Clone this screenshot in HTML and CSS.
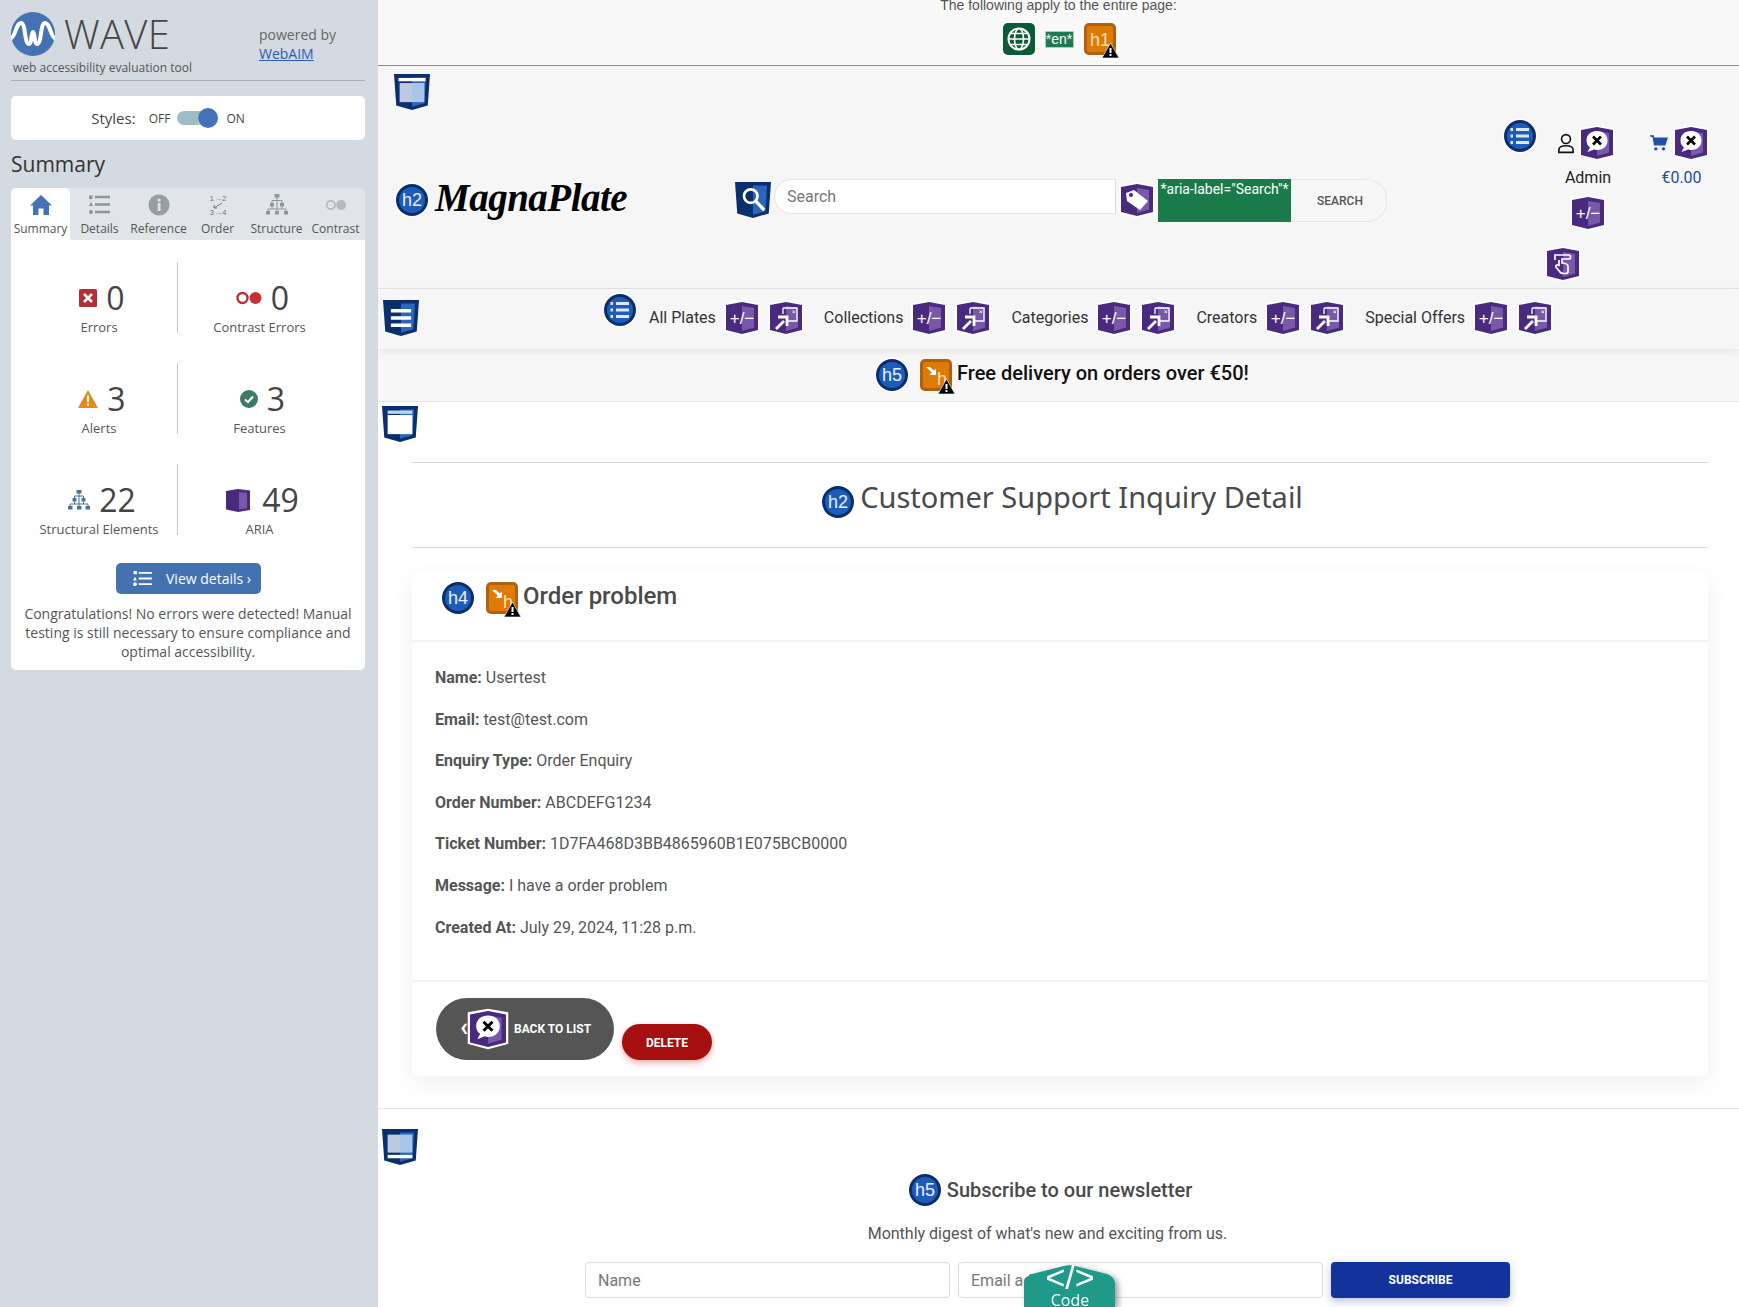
FILE: index.html
```html
<!DOCTYPE html>
<html lang="en">
<head>
    <meta charset="utf-8">
    <title>Customer Support Inquiry Detail</title>
    <link rel="stylesheet" href="styles.css">
</head>
<body>

<!-- shared shapes for the wave icons -->
<svg class="defs" aria-hidden="true">
    <symbol id="sh-purple" viewBox="0 0 32 32" overflow="visible">
        <path d="M0 3 16 0 32 3V28L16 32 0 28Z" fill="#4a2a7e" stroke="#fff" stroke-width="3" paint-order="stroke"/>
        <path d="M16 4 28 6V25.500L16 29Z" fill="#7a58a8"/>
    </symbol>
    <symbol id="sh-blue" viewBox="0 0 32 32" overflow="visible">
        <path d="M0 0H32L30 28 16 32 2 28Z" fill="#0b2f6c"/>
        <path d="M16 3H28.500L27 26 16 29Z" fill="#2a66bc"/>
    </symbol>
    <symbol id="bd-circle" viewBox="0 0 32 32" overflow="visible">
        <circle cx="16" cy="16" r="16" fill="#0a2e6c" stroke="#fff" stroke-width="3" paint-order="stroke"/>
        <circle cx="16" cy="16" r="13" fill="#1f5cb8"/>
    </symbol>
    <symbol id="bd-list" viewBox="0 0 32 32" overflow="visible">
        <circle cx="16" cy="16" r="16" fill="#0a2e6c" stroke="#fff" stroke-width="3" paint-order="stroke"/>
        <circle cx="16" cy="16" r="13" fill="#1f5cb8"/>
        <path d="M12 9.500H25M12 16H25M12 22.500H25" stroke="#dce8fa" stroke-width="3"/>
        <path d="M6.500 9.500H9M6.500 16H9M6.500 22.500H9" stroke="#dce8fa" stroke-width="3"/>
    </symbol>
    <symbol id="or-box" viewBox="0 0 32 32" overflow="visible">
        <rect width="32" height="32" rx="5" fill="#b0600f"/>
        <rect x="3" y="3" width="26" height="26" rx="2" fill="#dd7a08"/>
    </symbol>
    <symbol id="warn" viewBox="0 0 32 32" overflow="visible">
        <path d="M26.500 20 35 35H18Z" fill="#000" stroke="#fff" stroke-width=".6"/>
        <path d="M26.500 25V30M26.500 31V33" stroke="#fff" stroke-width="2"/>
    </symbol>
    <symbol id="or-arrow" viewBox="0 0 32 32" overflow="visible">
        <path d="M6 8H10L14 11.500 16 9.500V16H9.500L11.800 13.500Z" fill="#fff"/>
    </symbol>
    <symbol id="i-chat-x" viewBox="0 0 32 32" overflow="visible">
        <use href="#sh-purple" width="32" height="32"/>
        <path d="M16 4C9.500 4 5.500 8 5.500 13.500C5.500 16.500 6.800 18.800 9 20.300L6.500 25 13 22.500C14 22.800 15 23 16 23 22.500 23 26.500 19 26.500 13.500 26.500 8 22.500 4 16 4Z" fill="#fff"/>
        <path d="M12 9.500 20 17.500M20 9.500 12 17.500" stroke="#000" stroke-width="2.600"/>
    </symbol>
    <symbol id="i-link" viewBox="0 0 32 32" overflow="visible">
        <use href="#sh-purple" width="32" height="32"/>
        <path d="M13 6H27V19H17" fill="none" stroke="#fff" stroke-width="1.300"/>
        <path d="M13 6V12" stroke="#fff" stroke-width="1.300"/>
        <path d="M22.500 8.500 25 11M25 8.500 22.500 11" stroke="#fff"/>
        <path d="M6 27 14 19M8 15H17V24" fill="none" stroke="#fff" stroke-width="2.800"/>
    </symbol>
</svg>

<aside class="wave">
    <div class="wave-brand">
        <div class="wave-logo-block">
            <div class="wave-logo">
                <svg class="wave-mark" viewBox="0 0 44 44">
                    <circle cx="22" cy="22" r="22" fill="#4472b4"/>
                    <path d="M0 26C4 26 5 11 10 11 15 11 13 32 18 32 21 32 20 20 22 20 24 20 23 32 26 32 31 32 29 11 34 11 39 11 40 26 44 26" fill="none" stroke="#fff" stroke-width="4"/>
                </svg>
                <span class="wave-name">WAVE</span>
            </div>
            <div class="wave-tag">web accessibility evaluation tool</div>
        </div>
        <div class="wave-powered">powered by<br><a href="#">WebAIM</a></div>
    </div>

    <div class="styles-card">
        <span class="styles-label">Styles:</span>
        <span class="styles-state">OFF</span>
        <span class="toggle"></span>
        <span class="styles-state">ON</span>
    </div>

    <h2 class="wave-title">Summary</h2>

    <ul class="tabs">
        <li class="tab tab-active">
            <svg viewBox="0 0 24 22"><path d="M12 1 23 11.500H20V21H14.500V14.500H9.500V21H4V11.500H1Z" fill="#4472b4"/></svg>
            Summary
        </li>
        <li class="tab">
            <svg viewBox="0 0 24 22"><path d="M7 3H22M7 10.500H22M7 18H22" stroke="#8d959d" stroke-width="2.400"/><rect x="1" y="1.500" width="3.500" height="3.500" fill="#8d959d"/><path d="M3 8 5 12H1Z" fill="#8d959d"/><circle cx="3" cy="18" r="2" fill="#8d959d"/></svg>
            Details
        </li>
        <li class="tab">
            <svg viewBox="0 0 24 22"><circle cx="12" cy="11" r="10.500" fill="#969da4"/><rect x="10.700" y="9" width="2.800" height="8" fill="#dfe3e7"/><rect x="10.700" y="4.800" width="2.800" height="2.800" fill="#dfe3e7"/></svg>
            Reference
        </li>
        <li class="tab">
            <svg viewBox="0 0 24 22"><text x="12" y="7" class="order-num">1→2</text><path d="M16 9 8 14M8 14V11M8 14H11" stroke="#777" fill="none"/><text x="12" y="21" class="order-num">3→4</text></svg>
            Order
        </li>
        <li class="tab">
            <svg viewBox="0 0 24 22"><g fill="#8d959d"><rect x="9.500" y="0" width="5" height="3.500"/><rect x="5" y="9" width="4" height="3.500"/><rect x="15" y="9" width="4" height="3.500"/><rect x="1" y="17" width="4" height="3.500"/><rect x="10" y="17" width="4" height="3.500"/><rect x="19" y="17" width="4" height="3.500"/></g><path d="M12 3V17M7 9V6.500H17V9M7 12.500V15H3V17M17 12.500V15H21V17M7 15H17" fill="none" stroke="#8d959d"/></svg>
            Structure
        </li>
        <li class="tab">
            <svg viewBox="0 0 28 22"><circle cx="8" cy="11" r="4.800" fill="none" stroke="#b4babf" stroke-width="2"/><circle cx="20" cy="11" r="5.800" fill="#b4babf"/></svg>
            Contrast
        </li>
    </ul>

    <div class="panel">
        <div class="stats">
            <div class="stat">
                <div class="stat-top">
                    <svg class="stat-ico" viewBox="0 0 18 18"><rect width="18" height="18" rx="1.500" fill="#b03036"/><path d="M5 5 13 13M13 5 5 13" stroke="#fff" stroke-width="2.500"/></svg>
                    <span class="stat-num">0</span>
                </div>
                <div class="stat-label">Errors</div>
            </div>
            <div class="stat stat-right">
                <div class="stat-top">
                    <svg class="stat-ico stat-ico-wide" viewBox="0 0 26 14"><circle cx="6.500" cy="7" r="5" fill="none" stroke="#b83438" stroke-width="2.400"/><circle cx="19.500" cy="7" r="6" fill="#c43238"/></svg>
                    <span class="stat-num">0</span>
                </div>
                <div class="stat-label">Contrast Errors</div>
            </div>
            <div class="stat">
                <div class="stat-top">
                    <svg class="stat-ico stat-ico-alert" viewBox="0 0 20 18"><path d="M10 0 20 18H0Z" fill="#e28c1c"/><rect x="9" y="5.500" width="2" height="6.500" fill="#fff"/><rect x="9" y="13.500" width="2" height="2" fill="#fff"/></svg>
                    <span class="stat-num">3</span>
                </div>
                <div class="stat-label">Alerts</div>
            </div>
            <div class="stat stat-right">
                <div class="stat-top">
                    <svg class="stat-ico" viewBox="0 0 18 18"><circle cx="9" cy="9" r="9" fill="#3c7a64"/><path d="M5 9.500 8 12 13 6.500" fill="none" stroke="#fff" stroke-width="2"/></svg>
                    <span class="stat-num">3</span>
                </div>
                <div class="stat-label">Features</div>
            </div>
            <div class="stat">
                <div class="stat-top">
                    <svg class="stat-ico stat-ico-tree" viewBox="0 0 22 20"><g fill="#4c7199"><rect x="8.500" y="0" width="5" height="3.500"/><rect x="4.500" y="8" width="4" height="3.500"/><rect x="13.500" y="8" width="4" height="3.500"/><rect x="0" y="16" width="4.500" height="3.500"/><rect x="9" y="16" width="4.500" height="3.500"/><rect x="17.500" y="16" width="4.500" height="3.500"/></g><path d="M11 3V16M6.500 8V6H15.500V8M6.500 11.500V14H2V16M15.500 11.500V14H20V16M6.500 14H15.500" fill="none" stroke="#4c7199"/></svg>
                    <span class="stat-num">22</span>
                </div>
                <div class="stat-label">Structural Elements</div>
            </div>
            <div class="stat stat-right">
                <div class="stat-top">
                    <svg class="stat-ico stat-ico-aria" viewBox="0 0 24 23"><path d="M0 2 12 0 24 1.500V21L12 23 0 20.500Z" fill="#4a2a7e"/><path d="M13 3 21 4V19L13 20.500Z" fill="#7a58a8"/></svg>
                    <span class="stat-num">49</span>
                </div>
                <div class="stat-label">ARIA</div>
            </div>
        </div>
        <a class="view-btn" href="#">
            <svg viewBox="0 0 20 16"><path d="M6 2H20M6 8H20M6 14H20" stroke="#fff" stroke-width="2"/><rect x="0.500" y="0" width="3.500" height="3.500" fill="#fff"/><path d="M2 6 4 10H0Z" fill="#fff"/><circle cx="2" cy="14" r="2" fill="#fff"/></svg>
            <span>View details ›</span>
        </a>
        <p class="wave-note">Congratulations! No errors were detected! Manual testing is still necessary to ensure compliance and optimal accessibility.</p>
    </div>
</aside>

<main class="page">
    <div class="page-note">
        <div class="page-note-text">The following apply to the entire page:</div>
        <div class="page-note-icons">
            <svg class="wv" viewBox="0 0 32 32">
                <rect width="32" height="32" rx="5" fill="#0b5a38"/>
                <circle cx="16" cy="16" r="10.500" fill="none" stroke="#fff" stroke-width="2"/>
                <ellipse cx="16" cy="16" rx="4.500" ry="10.500" fill="none" stroke="#fff" stroke-width="1.600"/>
                <path d="M5.500 16H26.500M7 10.500H25M7 21.500H25" stroke="#fff" stroke-width="1.600"/>
            </svg>
            <span class="lang-tag">*en*</span>
            <svg class="wv" viewBox="0 0 32 32">
                <use href="#or-box" width="32" height="32"/>
                <text x="16" y="23" class="wv-text wv-text-or">h1</text>
                <use href="#warn" width="32" height="32"/>
            </svg>
        </div>
    </div>

    <header class="site-head">
        <svg class="wv wv-tall corner corner-head" viewBox="0 0 32 32">
            <use href="#sh-blue" width="32" height="32"/>
            <rect x="4" y="3.500" width="24" height="3" fill="#fff"/>
            <rect x="5" y="8" width="11" height="17" fill="#bcc9de"/>
            <rect x="16" y="8" width="11" height="17" fill="#a9c6ea"/>
        </svg>

        <div class="brand">
            <svg class="wv" viewBox="0 0 32 32"><use href="#bd-circle" width="32" height="32"/><text x="16" y="22" class="wv-text">h2</text></svg>
            <span class="logo">MagnaPlate</span>
        </div>

        <form class="search">
            <svg class="wv wv-search" viewBox="0 0 32 32">
                <use href="#sh-blue" width="32" height="32"/>
                <circle cx="14" cy="12.500" r="6" fill="none" stroke="#fff" stroke-width="2.400"/>
                <path d="M18.500 17 26 25" stroke="#fff" stroke-width="3"/>
            </svg>
            <input class="search-input" type="text" placeholder="Search">
            <svg class="wv wv-tag" viewBox="0 0 32 32">
                <use href="#sh-purple" width="32" height="32"/>
                <path d="M5 9 13 6 27 17 19 26 6 17Z" fill="#fff"/>
                <circle cx="10" cy="11" r="2" fill="#4a2a7e"/>
            </svg>
            <span class="aria-note">*aria-label="Search"*</span>
            <button class="search-btn" type="button">SEARCH</button>
        </form>

        <div class="account">
            <svg class="wv" viewBox="0 0 32 32"><use href="#bd-list" width="32" height="32"/></svg>
            <div class="acct acct-user">
                <div class="acct-row">
                    <svg class="acct-ico" viewBox="0 0 18 24"><circle cx="9" cy="7" r="5" fill="none" stroke="#111" stroke-width="1.800"/><path d="M1 22V19C1 16 4 14.500 9 14.500S17 16 17 19V22Z" fill="none" stroke="#111" stroke-width="1.800"/></svg>
                    <svg class="wv" viewBox="0 0 32 32"><use href="#i-chat-x" width="32" height="32"/></svg>
                </div>
                <div class="acct-label">Admin</div>
                <svg class="wv acct-gap" viewBox="0 0 32 32"><use href="#sh-purple" width="32" height="32"/><text x="16" y="21.500" class="wv-text wv-plus">+/−</text></svg>
                <svg class="wv acct-touch" viewBox="0 0 32 32">
                    <use href="#sh-purple" width="32" height="32"/>
                    <path d="M8 12V7H22C24 7 24 11 22 11H15V15C15 15 20 15 21 18V24C21 26 14 26 13 24L9 19C8 17 11 16 12 18V12" fill="none" stroke="#fff" stroke-width="1.700"/>
                </svg>
            </div>
            <div class="acct acct-cart">
                <div class="acct-row">
                    <svg class="cart-ico" viewBox="0 0 20 18"><path d="M0 1H3.500L5 11H16.500L19 3.500H4" fill="#1d4fa8" stroke="#1d4fa8" stroke-width="1.500"/><circle cx="6.500" cy="15.500" r="1.900" fill="#1d4fa8"/><circle cx="15" cy="15.500" r="1.900" fill="#1d4fa8"/></svg>
                    <svg class="wv" viewBox="0 0 32 32"><use href="#i-chat-x" width="32" height="32"/></svg>
                </div>
                <div class="acct-label acct-price">€0.00</div>
            </div>
        </div>
    </header>

    <nav class="site-nav">
        <svg class="wv wv-tall corner corner-nav" viewBox="0 0 32 32">
            <use href="#sh-blue" width="32" height="32"/>
            <path d="M7 9.500H25M7 16H25M7 22.500H25" stroke="#fff" stroke-width="3.200"/>
        </svg>
        <svg class="wv nav-list" viewBox="0 0 32 32"><use href="#bd-list" width="32" height="32"/></svg>
        <div class="nav-item">
            <a href="#">All Plates</a>
            <svg class="wv" viewBox="0 0 32 32"><use href="#sh-purple" width="32" height="32"/><text x="16" y="21.500" class="wv-text wv-plus">+/−</text></svg>
            <svg class="wv" viewBox="0 0 32 32"><use href="#i-link" width="32" height="32"/></svg>
        </div>
        <div class="nav-item">
            <a href="#">Collections</a>
            <svg class="wv" viewBox="0 0 32 32"><use href="#sh-purple" width="32" height="32"/><text x="16" y="21.500" class="wv-text wv-plus">+/−</text></svg>
            <svg class="wv" viewBox="0 0 32 32"><use href="#i-link" width="32" height="32"/></svg>
        </div>
        <div class="nav-item">
            <a href="#">Categories</a>
            <svg class="wv" viewBox="0 0 32 32"><use href="#sh-purple" width="32" height="32"/><text x="16" y="21.500" class="wv-text wv-plus">+/−</text></svg>
            <svg class="wv" viewBox="0 0 32 32"><use href="#i-link" width="32" height="32"/></svg>
        </div>
        <div class="nav-item">
            <a href="#">Creators</a>
            <svg class="wv" viewBox="0 0 32 32"><use href="#sh-purple" width="32" height="32"/><text x="16" y="21.500" class="wv-text wv-plus">+/−</text></svg>
            <svg class="wv" viewBox="0 0 32 32"><use href="#i-link" width="32" height="32"/></svg>
        </div>
        <div class="nav-item">
            <a href="#">Special Offers</a>
            <svg class="wv" viewBox="0 0 32 32"><use href="#sh-purple" width="32" height="32"/><text x="16" y="21.500" class="wv-text wv-plus">+/−</text></svg>
            <svg class="wv" viewBox="0 0 32 32"><use href="#i-link" width="32" height="32"/></svg>
        </div>
    </nav>

    <div class="promo">
        <svg class="wv" viewBox="0 0 32 32"><use href="#bd-circle" width="32" height="32"/><text x="16" y="22" class="wv-text">h5</text></svg>
        <svg class="wv" viewBox="0 0 32 32">
            <use href="#or-box" width="32" height="32"/>
            <use href="#or-arrow" width="32" height="32"/>
            <text x="22" y="26" class="wv-text wv-text-or">h</text>
            <use href="#warn" width="32" height="32"/>
        </svg>
        <span class="promo-text">Free delivery on orders over €50!</span>
    </div>

    <section class="content">
        <svg class="wv wv-tall corner corner-main" viewBox="0 0 32 32">
            <use href="#sh-blue" width="32" height="32"/>
            <rect x="5" y="4" width="22" height="3" fill="#bcd2ee"/>
            <rect x="5" y="8" width="22" height="17" fill="#fff"/>
        </svg>
        <hr class="rule">
        <h2 class="page-title">
            <svg class="wv" viewBox="0 0 32 32"><use href="#bd-circle" width="32" height="32"/><text x="16" y="22" class="wv-text">h2</text></svg>
            <span class="page-title-text">Customer Support Inquiry Detail</span>
        </h2>
        <hr class="rule">

        <article class="card">
            <div class="card-head">
                <svg class="wv" viewBox="0 0 32 32"><use href="#bd-circle" width="32" height="32"/><text x="16" y="22" class="wv-text">h4</text></svg>
                <svg class="wv" viewBox="0 0 32 32">
                    <use href="#or-box" width="32" height="32"/>
                    <use href="#or-arrow" width="32" height="32"/>
                    <text x="22" y="26" class="wv-text wv-text-or">h</text>
                    <use href="#warn" width="32" height="32"/>
                </svg>
                <h4 class="card-title">Order problem</h4>
            </div>
            <div class="card-body">
                <p><strong>Name:</strong> Usertest</p>
                <p><strong>Email:</strong> test@test.com</p>
                <p><strong>Enquiry Type:</strong> Order Enquiry</p>
                <p><strong>Order Number:</strong> ABCDEFG1234</p>
                <p><strong>Ticket Number:</strong> 1D7FA468D3BB4865960B1E075BCB0000</p>
                <p><strong>Message:</strong> I have a order problem</p>
                <p><strong>Created At:</strong> July 29, 2024, 11:28 p.m.</p>
            </div>
            <div class="card-foot">
                <a class="btn-back" href="#">
                    <span class="chev">‹</span>
                    <svg class="wv wv-back" viewBox="0 0 32 32">
                        <path d="M-2 1 16 -2 34 1V29L16 34 -2 29Z" fill="#fff"/>
                        <use href="#i-chat-x" width="32" height="32"/>
                    </svg>
                    BACK TO LIST
                </a>
                <a class="btn-del" href="#">DELETE</a>
            </div>
        </article>
    </section>

    <footer class="news">
        <svg class="wv wv-tall corner corner-foot" viewBox="0 0 32 32">
            <use href="#sh-blue" width="32" height="32"/>
            <rect x="5" y="5" width="11" height="16" fill="#bcc9de"/>
            <rect x="16" y="5" width="11" height="16" fill="#a9c6ea"/>
            <rect x="5" y="23" width="22" height="3" fill="#fff"/>
        </svg>
        <h5 class="news-title">
            <svg class="wv" viewBox="0 0 32 32"><use href="#bd-circle" width="32" height="32"/><text x="16" y="22" class="wv-text">h5</text></svg>
            Subscribe to our newsletter
        </h5>
        <p class="news-sub">Monthly digest of what's new and exciting from us.</p>
        <form class="news-form">
            <input class="news-input" type="text" placeholder="Name">
            <input class="news-input" type="text" placeholder="Email address">
            <button class="news-btn" type="button">SUBSCRIBE</button>
        </form>
    </footer>

    <div class="code-tab">
        <svg viewBox="0 0 91 42" width="91" height="42">
            <path d="M0 42V20C0 14 3 11 8 9L40 1C44 0 47 0 51 1L83 9C88 11 91 14 91 20V42Z" fill="#1f9a8a"/>
            <text x="46" y="24" class="code-glyph">&lt;/&gt;</text>
            <text x="46" y="41" class="code-word">Code</text>
        </svg>
    </div>
</main>

</body>
</html>
```
FILE: styles.css
```css
* {
    box-sizing: border-box;
}

html, body {
    margin: 0;
    height: 1307px;
    overflow: hidden;
}

body {
    display: flex;
    font-family: "Roboto", sans-serif;
    font-size: 16px;
    color: #555;
    background: #fff;
}

.defs {
    position: absolute;
    width: 0;
    height: 0;
}

/* ---- wave sidebar ---- */
.wave {
    flex: 0 0 378px;
    height: 1307px;
    padding: 0 13px 0 11px;
    background: #d4dae1;
    font-family: "Open Sans", sans-serif;
    color: #444;
}

.wave-brand {
    display: flex;
    height: 81px;
    border-bottom: 1px solid #a9afb6;
}

.wave-logo-block {
    width: 248px;
}

.wave-logo {
    display: flex;
    align-items: center;
    gap: 9px;
    padding-top: 12px;
    height: 56px;
}

.wave-mark {
    width: 44px;
    height: 44px;
}

.wave-name {
    font-size: 40px;
    font-weight: 300;
    line-height: 44px;
    letter-spacing: 0.3px;
    color: #444;
}

.wave-tag {
    padding: 3px 0 0 2px;
    font-size: 12px;
    line-height: 18px;
    color: #555;
}

.wave-powered {
    padding-top: 25px;
    font-size: 14px;
    line-height: 19px;
    color: #666;
}

.wave-powered a {
    color: #2a5db0;
}

.styles-card {
    display: flex;
    align-items: center;
    justify-content: center;
    height: 44px;
    margin-top: 15px;
    padding-right: 40px;
    background: #fff;
    border-radius: 5px;
    font-size: 12px;
}

.styles-label {
    margin-right: 13px;
    font-size: 15px;
}

.toggle {
    position: relative;
    width: 33px;
    height: 14px;
    margin: 0 16px 0 7px;
    background: #9dbcc5;
    border-radius: 7px;
}

.toggle::after {
    content: "";
    position: absolute;
    top: -3px;
    right: -8px;
    width: 20px;
    height: 20px;
    background: #4472b8;
    border-radius: 50%;
    box-shadow: 0 1px 1px #fff;
}

.wave-title {
    margin: 5px 0;
    font-size: 21px;
    font-weight: 400;
    line-height: 38px;
    color: #333;
}

.tabs {
    display: flex;
    height: 52px;
    margin: 0;
    padding: 0;
    list-style: none;
    background: #e1e5e9;
    border-radius: 5px 5px 0 0;
}

.tab {
    display: flex;
    flex: 0 0 59px;
    flex-direction: column;
    align-items: center;
    padding-top: 6px;
    font-size: 12px;
    line-height: 16px;
    color: #555;
    white-space: nowrap;
}

.tab svg {
    width: 24px;
    height: 22px;
    margin-bottom: 5px;
}

.tab-active {
    background: #fff;
    border-radius: 5px 5px 0 0;
}

.order-num {
    font: 8px "Liberation Sans", sans-serif;
    fill: #777;
    text-anchor: middle;
}

.panel {
    height: 430px;
    padding-top: 22px;
    background: #fff;
    border-radius: 0 0 5px 5px;
}

.stats {
    display: grid;
    grid-template-columns: 156px 164px;
    grid-auto-rows: 71px;
    row-gap: 30px;
    margin-left: 10px;
}

.stat {
    display: flex;
    flex-direction: column;
    align-items: center;
    padding-top: 18px;
}

.stat-right {
    border-left: 1px solid #c4c8cc;
}

.stat-top {
    display: flex;
    align-items: center;
    height: 36px;
    margin-left: 6px;
    gap: 9px;
}

.stat-ico {
    width: 18px;
    height: 18px;
}

.stat-ico-wide {
    width: 26px;
    height: 14px;
}

.stat-ico-alert {
    width: 20px;
    height: 18px;
}

.stat-ico-tree {
    width: 22px;
    height: 20px;
}

.stat-ico-aria {
    width: 24px;
    height: 23px;
    margin-right: 3px;
}

.stat-num {
    font-size: 32px;
    line-height: 36px;
    color: #444;
}

.stat-label {
    margin-top: 2px;
    font-size: 13px;
    line-height: 18px;
    color: #555;
    white-space: nowrap;
}

.view-btn {
    display: flex;
    align-items: center;
    width: 145px;
    height: 31px;
    margin: 28px 0 0 105px;
    padding-left: 17px;
    gap: 14px;
    background: #4472b0;
    border-radius: 5px;
    font-size: 14px;
    color: #fff;
    text-decoration: none;
}

.view-btn svg {
    width: 19px;
    height: 15px;
}

.wave-note {
    margin: 10px 0 0;
    padding: 0 10px;
    font-size: 14px;
    line-height: 19px;
    text-align: center;
    color: #555;
}

/* ---- page ---- */
.page {
    position: relative;
    flex: 1;
    min-width: 0;
    height: 1307px;
    overflow: hidden;
}

.wv {
    flex: none;
    display: block;
    width: 32px;
    height: 32px;
    overflow: visible;
}

.wv-text {
    font: 18px "Liberation Sans", sans-serif;
    fill: #e8f0ff;
    text-anchor: middle;
}

.wv-text-or {
    fill: #fbe0b0;
}

.wv-plus {
    font-size: 17px;
    fill: #fff;
}

.wv-tall {
    width: 36px;
    height: 36px;
}

.corner {
    position: absolute;
    left: 4px;
}

.corner-head {
    left: 16px;
    top: 8px;
}

.corner-nav {
    left: 5px;
    top: 11px;
}

.corner-main {
    top: 4px;
}

.corner-foot {
    top: 20px;
}

.page-note {
    height: 66px;
    background: #f9f9f9;
    border-bottom: 1px solid #8a8a8a;
    text-align: center;
}

.page-note-text {
    position: relative;
    top: -3px;
    height: 13px;
    font: 14px/16px "Liberation Sans", sans-serif;
    color: #555;
}

.page-note-icons {
    display: flex;
    align-items: center;
    justify-content: center;
    gap: 10px;
    margin-top: 10px;
    padding-left: 1px;
}

.lang-tag {
    width: 29px;
    height: 17px;
    background: #1d7a50;
    border: 1px solid #a9d2bd;
    font: 14px/15px "Liberation Sans", sans-serif;
    color: #fff;
    white-space: nowrap;
}

.site-head {
    position: relative;
    display: flex;
    align-items: flex-start;
    height: 223px;
    padding: 0 31px 0 18px;
    background: #f6f6f6;
    border-bottom: 1px solid #e2e2e2;
}

.brand {
    display: flex;
    flex: 0 0 339px;
    align-items: center;
    gap: 7px;
    margin-top: 118px;
    height: 32px;
}

.logo {
    margin-top: -6px;
    font: italic 700 39px "Liberation Serif", serif;
    letter-spacing: -0.5px;
    color: #000;
}

.search {
    display: flex;
    align-items: flex-start;
    margin-top: 113px;
}

.wv-search {
    width: 36px;
    height: 36px;
    margin: 3px 3px 0 0;
}

.search-input {
    width: 342px;
    height: 35px;
    padding: 0 12px;
    border: 1px solid #e4e4e4;
    border-right-color: #ddd;
    border-radius: 18px 0 0 18px;
    background: #fff;
    font: 16px "Roboto", sans-serif;
}

.search-input::placeholder,
.news-input::placeholder {
    color: #777;
}

.wv-tag {
    margin: 5px 5px 0 5px;
}

.aria-note {
    width: 133px;
    height: 43px;
    padding-top: 3px;
    background: #1a7a4a;
    font-size: 14px;
    line-height: 14px;
    color: #fff;
    white-space: nowrap;
    text-align: center;
}

.search-btn {
    width: 96px;
    height: 43px;
    padding: 0 0 0 3px;
    background: #f6f6f6;
    border: 1px solid #e8e8e8;
    border-left: 0;
    border-radius: 0 20px 20px 0;
    font: 500 12px "Roboto", sans-serif;
    color: #555;
}

.account {
    display: flex;
    align-items: flex-start;
    margin: 54px 0 0 auto;
}

.acct {
    display: flex;
    flex-direction: column;
    align-items: center;
}

.acct-user {
    width: 60px;
    margin: 7px 32px 0 22px;
}

.acct-cart {
    width: 58px;
    margin-top: 7px;
}

.acct-row {
    display: flex;
    align-items: center;
    align-self: flex-start;
    gap: 7px;
}

.acct-ico {
    width: 16px;
    height: 23px;
}

.cart-ico {
    width: 18px;
    height: 18px;
}

.acct-label {
    margin-top: 7px;
    line-height: 24px;
    color: #222;
}

.acct-price {
    padding-left: 5px;
    color: #2a4a9a;
}

.acct-gap {
    margin-top: 7px;
}

.acct-touch {
    margin: 19px 0 0 -50px;
}

.site-nav {
    position: relative;
    z-index: 1;
    display: flex;
    align-items: center;
    gap: 22px;
    height: 60px;
    padding: 0 0 2px 226px;
    background: #f6f6f6;
    box-shadow: 0 3px 8px rgba(0, 0, 0, 0.08);
}

.nav-list {
    margin: -17px -9px 0 0;
}

.nav-item {
    display: flex;
    align-items: center;
    gap: 12px;
}

.nav-item a {
    margin: -2px -2px 0 0;
    color: #333;
    text-decoration: none;
}

.promo {
    display: flex;
    align-items: center;
    height: 53px;
    padding-left: 498px;
    gap: 12px;
    background: #f7f7f7;
    border-bottom: 1px solid #e6e6e6;
}

.promo-text {
    margin: -5px 0 0 -7px;
    font-size: 20px;
    font-weight: 500;
    color: #111;
}

.content {
    position: relative;
    padding: 60px 31px 32px 34px;
    border-bottom: 1px solid #e4e4e4;
}

.rule {
    height: 1px;
    margin: 0;
    border: 0;
    background: #d8d8d8;
}

.page-title {
    display: flex;
    align-items: center;
    justify-content: center;
    gap: 6px;
    height: 84px;
    margin: 0;
    padding: 0 0 7px 5px;
    font: 400 29px "Noto Sans", sans-serif;
    color: #4a4a4a;
}

.page-title-text {
    margin-bottom: 11px;
}

.card {
    margin-top: 23px;
    background: #fff;
    border-radius: 8px;
    box-shadow: 0 8px 24px rgba(0, 0, 0, 0.06);
}

.card-head {
    display: flex;
    align-items: flex-start;
    gap: 12px;
    height: 71px;
    padding: 11px 0 0 30px;
    border-bottom: 2px solid #f3f3f3;
}

.card-title {
    margin: -2px 0 0 -7px;
    font-size: 24px;
    font-weight: 500;
    line-height: 32px;
    color: #4a4a4a;
}

.card-body {
    height: 338px;
    padding: 24px 0 0 23px;
}

.card-body p {
    margin: 0 0 17.6px;
    line-height: 24px;
}

.card-foot {
    display: flex;
    align-items: flex-end;
    gap: 8px;
    padding: 16px 0 16px 24px;
    border-top: 2px solid #f3f3f3;
}

.btn-back {
    display: flex;
    align-items: center;
    width: 178px;
    height: 62px;
    padding-left: 24px;
    background: #555;
    border-radius: 31px;
    font-size: 12px;
    font-weight: 700;
    color: #fff;
    text-decoration: none;
}

.chev {
    width: 10px;
    font-size: 26px;
    font-weight: 700;
    line-height: 18px;
    margin-top: -4px;
}

.wv-back {
    width: 36px;
    height: 36px;
    margin-right: 8px;
}

.btn-del {
    display: flex;
    align-items: center;
    justify-content: center;
    width: 90px;
    height: 36px;
    padding-top: 2px;
    background: #a50f0f;
    border-radius: 18px;
    box-shadow: 0 3px 6px rgba(200, 30, 30, 0.35);
    font-size: 12px;
    font-weight: 700;
    color: #fff;
    text-decoration: none;
}

.news {
    position: relative;
    padding: 65px 0 0 207px;
}

.news-title {
    display: flex;
    align-items: center;
    justify-content: center;
    gap: 6px;
    width: 931px;
    margin: 0;
    font-size: 20px;
    font-weight: 500;
    line-height: 32px;
    color: #4a4a4a;
}

.news-sub {
    width: 925px;
    margin: 16px 0 0;
    line-height: 24px;
    text-align: center;
}

.news-form {
    display: flex;
    gap: 8px;
    width: 925px;
    margin-top: 16px;
}

.news-input {
    width: 365px;
    height: 36px;
    padding: 0 12px;
    background: #fff;
    border: 1px solid #dcdcdc;
    border-radius: 4px;
    font: 16px "Roboto", sans-serif;
}

.news-btn {
    flex: 1;
    height: 36px;
    background: #13339a;
    border: 0;
    border-radius: 4px;
    box-shadow: 0 3px 8px rgba(19, 51, 154, 0.3);
    font: 700 12px "Roboto", sans-serif;
    color: #fff;
}

.code-tab {
    position: absolute;
    left: 646px;
    top: 1265px;
    width: 91px;
    height: 42px;
    filter: drop-shadow(3px 2px 3px rgba(0, 0, 0, 0.4));
}

.code-tab svg {
    display: block;
    overflow: hidden;
}

.code-glyph {
    font: 34px "Liberation Sans", sans-serif;
    fill: #fff;
    text-anchor: middle;
}

.code-word {
    font: 16px "Open Sans", sans-serif;
    fill: #fff;
    text-anchor: middle;
}
```
